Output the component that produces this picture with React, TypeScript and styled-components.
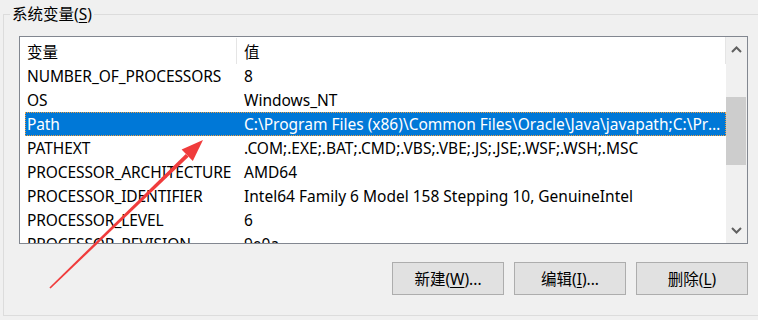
import React from 'react';
import styled, { createGlobalStyle } from 'styled-components';

const GlobalStyle = createGlobalStyle`
  html, body {
    margin: 0;
    padding: 0;
    background: #f0f0f0;
  }
  body {
    font-family: 'Noto Sans', 'Noto Sans CJK SC', sans-serif;
    font-size: 15.5px;
    color: #000;
  }
`;

const Page = styled.div`
  position: relative;
  width: 758px;
  height: 320px;
  overflow: hidden;
  padding: 14px 0 0 3px;
  box-sizing: border-box;
`;

const Group = styled.div`
  width: 800px;
  box-sizing: border-box;
  border: 1px solid #dcdcdc;
  padding: 0 0 20px 15px;
  display: flex;
  flex-direction: column;
  align-items: flex-start;
`;

const GroupTitle = styled.div`
  margin: -9px 0 0 -9px;
  padding: 0 2px;
  height: 16px;
  line-height: 16px;
  background: #f0f0f0;
  white-space: nowrap;
`;

const ListBox = styled.div`
  margin-top: 14px;
  width: 729px;
  height: 208px;
  box-sizing: border-box;
  border: 1px solid #828790;
  background: #fff;
  display: flex;
  overflow: hidden;
`;

const ListContent = styled.div`
  flex: 1;
  display: flex;
  flex-direction: column;
  min-width: 0;
  overflow: hidden;
`;

const HeaderRow = styled.div`
  display: flex;
  height: 27px;
  flex-shrink: 0;
  padding-left: 5px;
  border-right: 1px solid #e5e5e5;
`;

const HeaderCell = styled.div<{ $w?: number }>`
  ${(p) => (p.$w ? `width: ${p.$w}px;` : 'flex: 1;')}
  box-sizing: border-box;
  display: flex;
  align-items: center;
  padding-left: ${(p) => (p.$w ? 2 : 7)}px;
  ${(p) => (p.$w ? 'border-right: 1px solid #e5e5e5;' : '')}
  margin-top: 1px;
`;

const Row = styled.div<{ $selected?: boolean }>`
  display: flex;
  height: 24px;
  flex-shrink: 0;
  margin-left: 5px;
  box-sizing: border-box;
  align-items: center;
  background: ${(p) => (p.$selected ? '#0078d7' : 'transparent')};
  color: ${(p) => (p.$selected ? '#fff' : '#000')};
  outline: ${(p) => (p.$selected ? '1px dotted #f0a040' : 'none')};
  outline-offset: -1px;
`;

const NameCell = styled.div<{ $w: number }>`
  width: ${(p) => p.$w}px;
  flex-shrink: 0;
  box-sizing: border-box;
  padding-left: 2px;
  white-space: nowrap;
  letter-spacing: -0.1px;
`;

const ValueCell = styled.div`
  flex: 1;
  min-width: 0;
  box-sizing: border-box;
  padding: 0 4px 0 7px;
  white-space: nowrap;
  overflow: hidden;
  text-overflow: ellipsis;
`;

const Scrollbar = styled.div`
  width: 21px;
  flex-shrink: 0;
  background: #f0f0f0;
  display: flex;
  flex-direction: column;
`;

const ScrollButton = styled.div`
  height: 25px;
  flex-shrink: 0;
  display: flex;
  align-items: center;
  justify-content: center;
`;

const ScrollTrack = styled.div`
  flex: 1;
  padding-top: 35px;
`;

const Thumb = styled.div`
  height: 68px;
  margin-right: 1px;
  background: #cdcdcd;
`;

const ButtonRow = styled.div`
  margin-top: 18px;
  width: 729px;
  display: flex;
  justify-content: flex-end;
  gap: 10px;
`;

const Button = styled.div`
  width: 112px;
  height: 33px;
  box-sizing: border-box;
  border: 1px solid #adadad;
  background: #e1e1e1;
  display: flex;
  align-items: center;
  justify-content: center;
  white-space: nowrap;
`;

const U = styled.span`
  text-decoration: underline;
  text-underline-offset: 2px;
`;

const ArrowLayer = styled.svg`
  position: absolute;
  left: 0;
  top: 0;
  pointer-events: none;
`;

const Chevron = ({ down }: { down?: boolean }) => (
  <svg width="11" height="7" viewBox="0 0 11 7">
    <polyline
      points={down ? '1,1 5.5,5.5 10,1' : '1,6 5.5,1.5 10,6'}
      fill="none"
      stroke="#606060"
      strokeWidth="2"
    />
  </svg>
);

const COL1 = 212;

const variables = [
  { name: 'NUMBER_OF_PROCESSORS', value: '8' },
  { name: 'OS', value: 'Windows_NT' },
  {
    name: 'Path',
    value:
      'C:\\Program Files (x86)\\Common Files\\Oracle\\Java\\javapath;C:\\Program Files (x86)\\Intel\\iCLS Client\\;C:\\Windows\\system32',
    selected: true,
  },
  { name: 'PATHEXT', value: '.COM;.EXE;.BAT;.CMD;.VBS;.VBE;.JS;.JSE;.WSF;.WSH;.MSC' },
  { name: 'PROCESSOR_ARCHITECTURE', value: 'AMD64' },
  { name: 'PROCESSOR_IDENTIFIER', value: 'Intel64 Family 6 Model 158 Stepping 10, GenuineIntel' },
  { name: 'PROCESSOR_LEVEL', value: '6' },
  { name: 'PROCESSOR_REVISION', value: '9e0a' },
];

const App = () => {
  return (
    <>
      <GlobalStyle />
      <Page>
        <Group>
          <GroupTitle>
            系统变量(<U>S</U>)
          </GroupTitle>
          <ListBox>
            <ListContent>
              <HeaderRow>
                <HeaderCell $w={COL1}>变量</HeaderCell>
                <HeaderCell>值</HeaderCell>
              </HeaderRow>
              {variables.map(({ name, value, selected }) => (
                <Row key={name} $selected={selected}>
                  <NameCell $w={COL1}>{name}</NameCell>
                  <ValueCell>{value}</ValueCell>
                </Row>
              ))}
            </ListContent>
            <Scrollbar>
              <ScrollButton>
                <Chevron />
              </ScrollButton>
              <ScrollTrack>
                <Thumb />
              </ScrollTrack>
              <ScrollButton>
                <Chevron down />
              </ScrollButton>
            </Scrollbar>
          </ListBox>
          <ButtonRow>
            <Button>
              新建(<U>W</U>)...
            </Button>
            <Button>
              编辑(<U>I</U>)...
            </Button>
            <Button>
              删除(<U>L</U>)
            </Button>
          </ButtonRow>
        </Group>
        <ArrowLayer width="758" height="320" viewBox="0 0 758 320">
          <polygon
            points="49.4,287.4 50.6,288.6 188.6,156.7 185.8,153.9"
            fill="#f03c3c"
          />
          <polygon points="203,140 192.8,161 181.6,149.6" fill="#f03c3c" />
        </ArrowLayer>
      </Page>
    </>
  );
};

export default App;
